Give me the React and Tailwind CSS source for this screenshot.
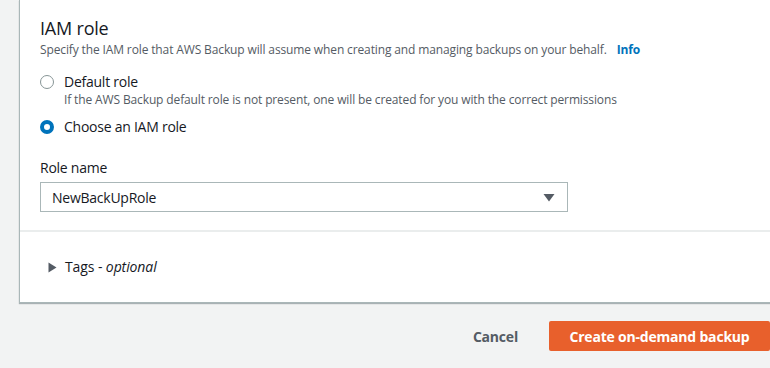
export default function App() {
  return (
    <div className="min-h-[368px] w-[770px] overflow-hidden bg-[#f2f3f3] pl-[19px] text-[#16191f]" style={{ fontFamily: '"Open Sans", "Noto Sans", sans-serif' }}>
      <div className="border-l border-b border-[#aab7b8] bg-white shadow-[0_1px_1px_0_rgba(0,28,36,0.3)]">
        <div className="px-5 pt-[17px] pb-[18px]">
          <h2 className="text-[18px] leading-[22px] tracking-[-0.2px]">IAM role</h2>
          <p className="mt-[3px] text-[12px] leading-[16px] tracking-[-0.13px] text-[#545b64]">
            Specify the IAM role that AWS Backup will assume when creating and managing backups on your behalf.
            <span className="ml-[10px] font-bold text-[#0073bb]">Info</span>
          </p>

          <div className="mt-[14px] flex items-start gap-[10px]">
            <span className="mt-[3px] h-[14px] w-[14px] shrink-0 rounded-full border border-[#879596] bg-white"></span>
            <div>
              <div className="text-[14px] leading-[20px] tracking-[-0.25px]">Default role</div>
              <div className="text-[12px] leading-[16px] tracking-[-0.13px] text-[#545b64]">If the AWS Backup default role is not present, one will be created for you with the correct permissions</div>
            </div>
          </div>

          <div className="mt-[9px] flex items-start gap-[10px]">
            <span className="mt-[3px] h-[14px] w-[14px] shrink-0 rounded-full border-[4px] border-[#0073bb] bg-white"></span>
            <div className="text-[14px] leading-[20px] tracking-[-0.25px]">Choose an IAM role</div>
          </div>

          <div className="mt-[21px] text-[14px] leading-[20px] tracking-[-0.25px]">Role name</div>
          <div className="mt-[4px] flex h-[30px] w-[528px] items-center justify-between border border-[#aab7b8] pl-[11px] pr-[12px]">
            <span className="text-[14px] tracking-[-0.25px]">NewBackUpRole</span>
            <svg width="12" height="9" viewBox="0 0 12 9">
              <path d="M0.5 1 L11.5 1 L6 8.5 Z" fill="#545b64" />
            </svg>
          </div>
        </div>

        <div className="h-[2px] bg-[#eaeded]"></div>

        <div className="flex items-center gap-[8px] pl-[28px] pt-[25px] pb-[25px]">
          <svg width="9" height="11" viewBox="0 0 9 11">
            <path d="M0.5 0.5 L8.5 5.5 L0.5 10.5 Z" fill="#545b64" />
          </svg>
          <span className="text-[14px] leading-[20px] tracking-[-0.1px]">
            Tags - <i>optional</i>
          </span>
        </div>
      </div>

      <div className="mt-[18px] flex items-center justify-end gap-[31px]">
        <span className="text-[14px] font-bold tracking-[-0.2px] text-[#545b64]">Cancel</span>
        <button className="h-[30px] w-[221px] rounded-[2px] bg-[#e8602c] text-[14px] font-bold tracking-[-0.2px] text-white">Create on-demand backup</button>
      </div>
    </div>
  );
}
